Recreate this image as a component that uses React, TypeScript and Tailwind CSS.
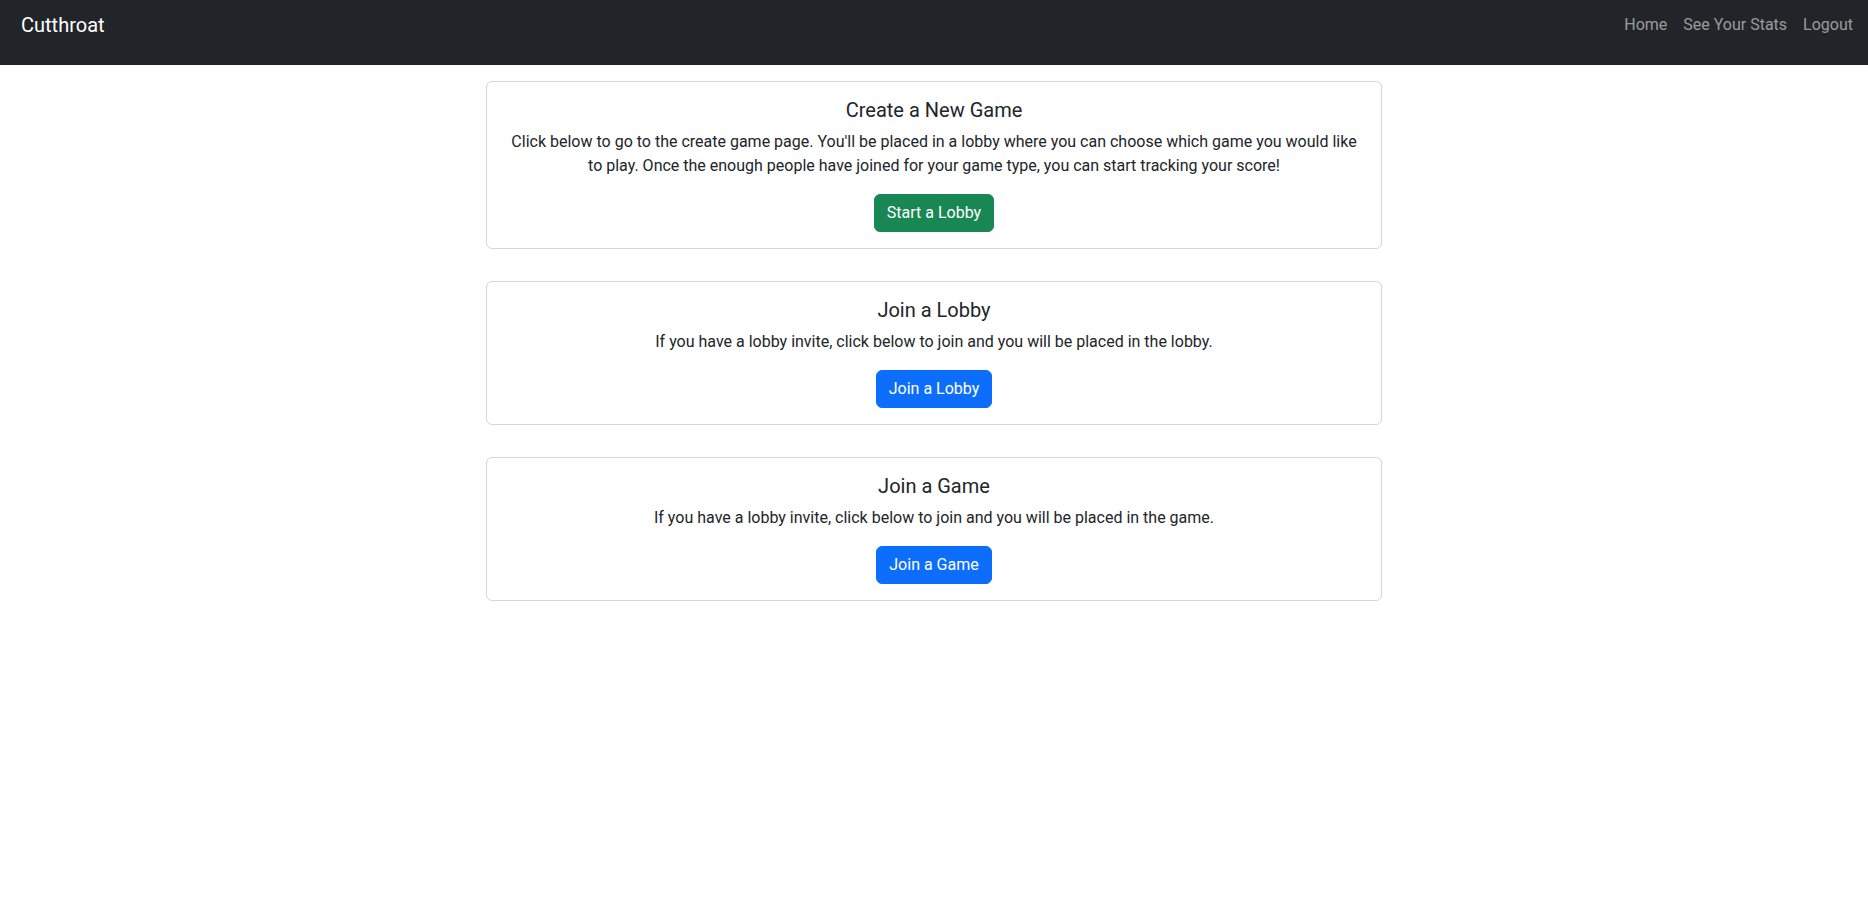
import React from "react";

const font = { fontFamily: 'Roboto, "Noto Sans", "Liberation Sans", sans-serif' };

function Card({
  title,
  text,
  button,
  color,
}: {
  title: string;
  text: string;
  button: string;
  color: "green" | "blue";
}) {
  return (
    <div className="w-[896px] mx-auto border border-[#d5d5d5] rounded-[6px] p-4 text-center text-[#212529]">
      <h5 className="text-[20px] leading-[24px] font-normal mb-2">{title}</h5>
      <p className="text-[16px] leading-[24px] mb-4">{text}</p>
      <button
        className={
          (color === "green" ? "bg-[#198754] border-[#198754]" : "bg-[#0d6efd] border-[#0d6efd]") +
          " text-white text-[16px] leading-[24px] px-3 py-[6px] border rounded-[6px]"
        }
      >
        {button}
      </button>
    </div>
  );
}

export default function App() {
  return (
    <div style={font} className="min-h-[915px] bg-white">
      <nav className="h-[65px] bg-[#212529] flex items-start justify-between pt-[5px] pl-[21px] pr-[7px]">
        <a className="text-white text-[20px] leading-[30px] py-[5px]">Cutthroat</a>
        <div className="flex">
          <a className="text-[rgba(255,255,255,0.55)] text-[16px] leading-6 py-2 px-2">Home</a>
          <a className="text-[rgba(255,255,255,0.55)] text-[16px] leading-6 py-2 px-2">See Your Stats</a>
          <a className="text-[rgba(255,255,255,0.55)] text-[16px] leading-6 py-2 px-2">Logout</a>
        </div>
      </nav>
      <div className="pt-4 flex flex-col gap-8">
        <Card
          title="Create a New Game"
          text="Click below to go to the create game page. You'll be placed in a lobby where you can choose which game you would like to play. Once the enough people have joined for your game type, you can start tracking your score!"
          button="Start a Lobby"
          color="green"
        />
        <Card
          title="Join a Lobby"
          text="If you have a lobby invite, click below to join and you will be placed in the lobby."
          button="Join a Lobby"
          color="blue"
        />
        <Card
          title="Join a Game"
          text="If you have a lobby invite, click below to join and you will be placed in the game."
          button="Join a Game"
          color="blue"
        />
      </div>
    </div>
  );
}
